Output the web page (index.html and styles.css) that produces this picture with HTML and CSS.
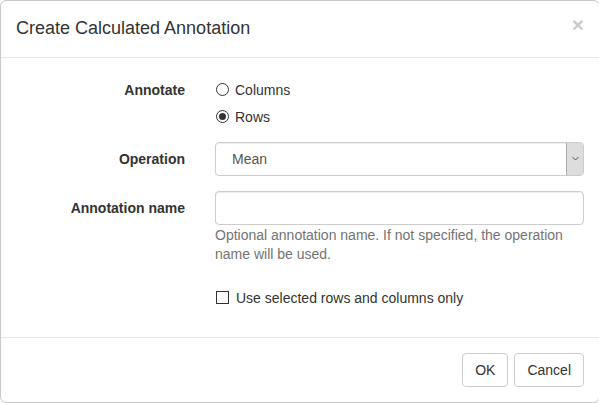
FILE: index.html
```html
<!DOCTYPE html>
<html>
<head>
<meta charset="utf-8">
<link rel="stylesheet" href="styles.css">
</head>
<body>
<div class="dialog">
  <div class="header">
    <h4 class="title">Create Calculated Annotation</h4>
    <span class="close">×</span>
  </div>
  <div class="body">
    <div class="group">
      <div class="label pad">Annotate</div>
      <div class="field">
        <label class="choice"><span class="radio"></span>Columns</label>
        <label class="choice"><span class="radio on"></span>Rows</label>
      </div>
    </div>
    <div class="group">
      <div class="label pad">Operation</div>
      <div class="field">
        <div class="select"><span class="select-text">Mean</span><span class="arrow"><svg width="7" height="5" viewBox="0 0 7 5"><path d="M0.5 1 L3.5 4 L6.5 1" fill="none" stroke="#555" stroke-width="1"/></svg></span></div>
      </div>
    </div>
    <div class="group">
      <div class="label pad">Annotation name</div>
      <div class="field">
        <div class="input"></div>
        <p class="help">Optional annotation name. If not specified, the operation name will be used.</p>
      </div>
    </div>
    <div class="group last">
      <div class="label"></div>
      <div class="field">
        <label class="choice"><span class="check"></span>Use selected rows and columns only</label>
      </div>
    </div>
  </div>
  <div class="footer">
    <button class="btn">OK</button>
    <button class="btn">Cancel</button>
  </div>
</div>
</body>
</html>
```

FILE: styles.css
```css
html, body {
  margin: 0;
  padding: 0;
  background: #fff;
  overflow: hidden;
}
body {
  font-family: "Liberation Sans", Arial, sans-serif;
  font-size: 14px;
  line-height: 20px;
  color: #333;
}
.dialog {
  width: 600px;
  height: 403px;
  box-sizing: border-box;
  border: 1px solid #c8c8c8;
  border-radius: 6px;
  background: #fff;
  display: flex;
  flex-direction: column;
}
.header {
  display: flex;
  align-items: flex-start;
  justify-content: space-between;
  padding: 15px;
  border-bottom: 1px solid #e5e5e5;
}
.title {
  margin: 0;
  font-size: 18px;
  font-weight: normal;
  line-height: 25.7px;
  color: #333;
}
.close {
  font-size: 21px;
  font-weight: bold;
  line-height: 1;
  color: #000;
  opacity: 0.2;
  margin-top: -2px;
  margin-right: 0;
}
.body {
  padding: 15px;
  flex: 1;
}
.group {
  display: flex;
  margin: 0 -15px 15px;
}
.group.last {
  margin-bottom: 0;
}
.label {
  width: 199px;
  box-sizing: border-box;
  padding: 0 15px;
  text-align: right;
  font-weight: bold;
}
.label.pad {
  padding-top: 7px;
}
.field {
  flex: 1;
  padding: 0 15px;
}
.choice {
  display: flex;
  align-items: center;
  padding-top: 7px;
  min-height: 20px;
  cursor: default;
}
.radio {
  width: 11px;
  height: 11px;
  border: 1px solid #333;
  border-radius: 50%;
  margin: 0 6px 0 1px;
  box-sizing: content-box;
  display: flex;
  align-items: center;
  justify-content: center;
}
.radio.on::after {
  content: "";
  width: 7px;
  height: 7px;
  border-radius: 50%;
  background: #333;
}
.check {
  width: 11px;
  height: 11px;
  border: 1px solid #333;
  margin: 0 7px 0 1px;
}
.select {
  height: 34px;
  box-sizing: border-box;
  border: 1px solid #ccc;
  border-radius: 4px;
  display: flex;
  align-items: stretch;
  box-shadow: inset 0 1px 1px rgba(0,0,0,.075);
}
.select-text {
  flex: 1;
  padding-left: 16px;
  line-height: 32px;
  color: #555;
}
.arrow {
  width: 16px;
  background: #dddddd;
  border-left: 1px solid #a9a9a9;
  display: flex;
  align-items: center;
  justify-content: center;
  border-radius: 0 3px 3px 0;
}
.input {
  height: 34px;
  box-sizing: border-box;
  border: 1px solid #ccc;
  border-radius: 4px;
  box-shadow: inset 0 1px 1px rgba(0,0,0,.075);
}
.help {
  margin: 1px 0 2px;
  color: #737373;
  line-height: 19px;
}
.footer {
  display: flex;
  justify-content: flex-end;
  gap: 6px;
  padding: 15px;
  border-top: 1px solid #e5e5e5;
}
.btn {
  font-family: inherit;
  font-size: 14px;
  line-height: 20px;
  padding: 6px 12px;
  border: 1px solid #ccc;
  border-radius: 4px;
  background: #fff;
  color: #333;
  margin: 0;
}
```
